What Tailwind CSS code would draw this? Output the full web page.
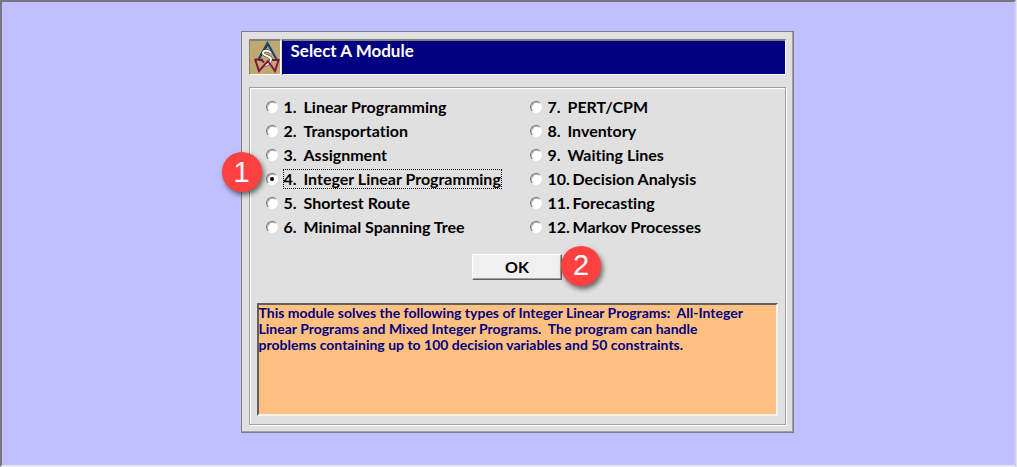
<!DOCTYPE html>
<html lang="en">
<head>
<meta charset="utf-8">
<title>Select A Module</title>
<script src="https://cdn.jsdelivr.net/npm/@tailwindcss/browser@4"></script>
</head>
<body class="flex min-h-screen flex-col bg-[#e3e3e3] font-['Century_Gothic',Lato,sans-serif] font-bold text-black [font-variant-ligatures:none]">
<main class="mr-px mb-px flex flex-1 justify-center border-2 border-t-[#77777f] border-r-[#cdcdfb] border-b-[#e8e8f4] border-l-[#77777f] bg-[#c0c0ff] pt-[29px] pb-8 pl-[18px]">
  <form class="w-full max-w-[553px] self-start border border-[#808080] bg-[#e0e0e0] p-[7px] shadow-[inset_-1px_-1px_0_#a0a0a0]">
    <header class="flex h-9 gap-px">
      <div class="w-8 border border-t-2 border-t-[#808080] border-r-white border-b-white border-l-[#808080] bg-[#c0a870]">
        <svg viewBox="0 0 30 33" class="size-full" fill="none" aria-hidden="true">
          <path d="M9 18.500L18 4l8 14" stroke="#111" stroke-width="1"/>
          <path d="M8 19L17.500 2L27 19M8 19h5M22 19h6" stroke="#124a72" stroke-width="2"/>
          <path d="M21 12c-2-3-8-3-8 0s8 3 8 6-3 6-6 6" stroke="#333" stroke-width="3"/>
          <path d="M21 12c-2-3-8-3-8 0s8 3 8 6-3 6-6 6" stroke="#fff" stroke-width="2"/>
          <path d="M5 18l4 12 9-10 7 10 4-12M5 18.500h6l3 3M22 19h7" stroke="#85133f" stroke-width="2"/>
        </svg>
      </div>
      <h1 class="flex-1 border border-t-2 border-t-[#808080] border-r-white border-b-white border-l-[#000060] bg-[#000080] pl-2 text-[17px] leading-5 text-white">Select A Module</h1>
    </header>
    <div class="mt-3 border border-[#a0a0a0] px-[7px] pt-[7px] pb-2 shadow-[inset_1px_1px_0_#fff,1px_1px_0_#fff]">
      <fieldset aria-label="Module" class="grid grid-cols-[264px_1fr] pl-[9px] text-base leading-6 [&_div_div]:flex [&_div_div]:h-6 [&_div_div]:items-center [&_div_div]:gap-[5px] [&_input]:grid [&_input]:size-3 [&_input]:shrink-0 [&_input]:appearance-none [&_input]:place-items-center [&_input]:rounded-full [&_input]:border [&_input]:border-t-[#777] [&_input]:border-r-white [&_input]:border-b-white [&_input]:border-l-[#777] [&_input]:bg-white [&_input]:shadow-[inset_1px_1px_0_#bbb] [&_input]:outline-none [&_input]:before:size-1 [&_input]:before:rounded-full [&_input]:checked:before:bg-black [&_label]:flex [&_label]:border [&_label]:border-transparent [&_label]:leading-[18px] [&_input:checked+label]:border-dotted [&_input:checked+label]:border-black">
        <div>
          <div><input id="m1" name="module" type="radio"><label for="m1"><span class="w-5">1.</span>Linear Programming</label></div>
          <div><input id="m2" name="module" type="radio"><label for="m2"><span class="w-5">2.</span>Transportation</label></div>
          <div><input id="m3" name="module" type="radio"><label for="m3"><span class="w-5">3.</span>Assignment</label></div>
          <div class="relative"><input id="m4" name="module" type="radio" checked><label for="m4"><span class="w-5">4.</span>Integer Linear Programming</label>
            <span class="absolute top-[-15px] left-[-44px] flex size-10 items-center justify-center rounded-full bg-[#ff4040] font-['Liberation_Sans',sans-serif] text-[29px] font-normal text-white shadow-[2px_3px_5px_rgba(0,0,0,0.55)]">1</span></div>
          <div><input id="m5" name="module" type="radio"><label for="m5"><span class="w-5">5.</span>Shortest Route</label></div>
          <div><input id="m6" name="module" type="radio"><label for="m6"><span class="w-5">6.</span>Minimal Spanning Tree</label></div>
        </div>
        <div>
          <div><input id="m7" name="module" type="radio"><label for="m7"><span class="w-5">7.</span>PERT/CPM</label></div>
          <div><input id="m8" name="module" type="radio"><label for="m8"><span class="w-5">8.</span>Inventory</label></div>
          <div><input id="m9" name="module" type="radio"><label for="m9"><span class="w-5">9.</span>Waiting Lines</label></div>
          <div><input id="m10" name="module" type="radio"><label for="m10"><span class="w-[25px]">10.</span>Decision Analysis</label></div>
          <div><input id="m11" name="module" type="radio"><label for="m11"><span class="w-[25px]">11.</span>Forecasting</label></div>
          <div><input id="m12" name="module" type="radio"><label for="m12"><span class="w-[25px]">12.</span>Markov Processes</label></div>
        </div>
      </fieldset>
      <div class="relative mx-auto mt-[15px] w-[90px]">
        <button type="button" class="block h-[26px] w-full border border-t-white border-r-[#606060] border-b-[#606060] border-l-white bg-[#f0f0f0] text-base leading-5 shadow-[inset_-1px_-1px_0_#a0a0a0]">OK</button>
        <span class="absolute top-[-8px] left-[89px] flex size-10 items-center justify-center rounded-full bg-[#ff4040] font-['Liberation_Sans',sans-serif] text-[29px] font-normal text-white shadow-[2px_3px_5px_rgba(0,0,0,0.55)]">2</span>
      </div>
      <textarea readonly aria-label="Module description" class="mt-[23px] block h-[113px] w-full resize-none overflow-hidden border-2 border-t-[#606060] border-r-[#f4f4f4] border-b-[#f4f4f4] border-l-[#606060] bg-[#ffc080] text-sm leading-4 text-[#000080] outline-none">This module solves the following types of Integer Linear Programs:  All-Integer
Linear Programs and Mixed Integer Programs.  The program can handle
problems containing up to 100 decision variables and 50 constraints.</textarea>
    </div>
  </form>
</main>
</body>
</html>
